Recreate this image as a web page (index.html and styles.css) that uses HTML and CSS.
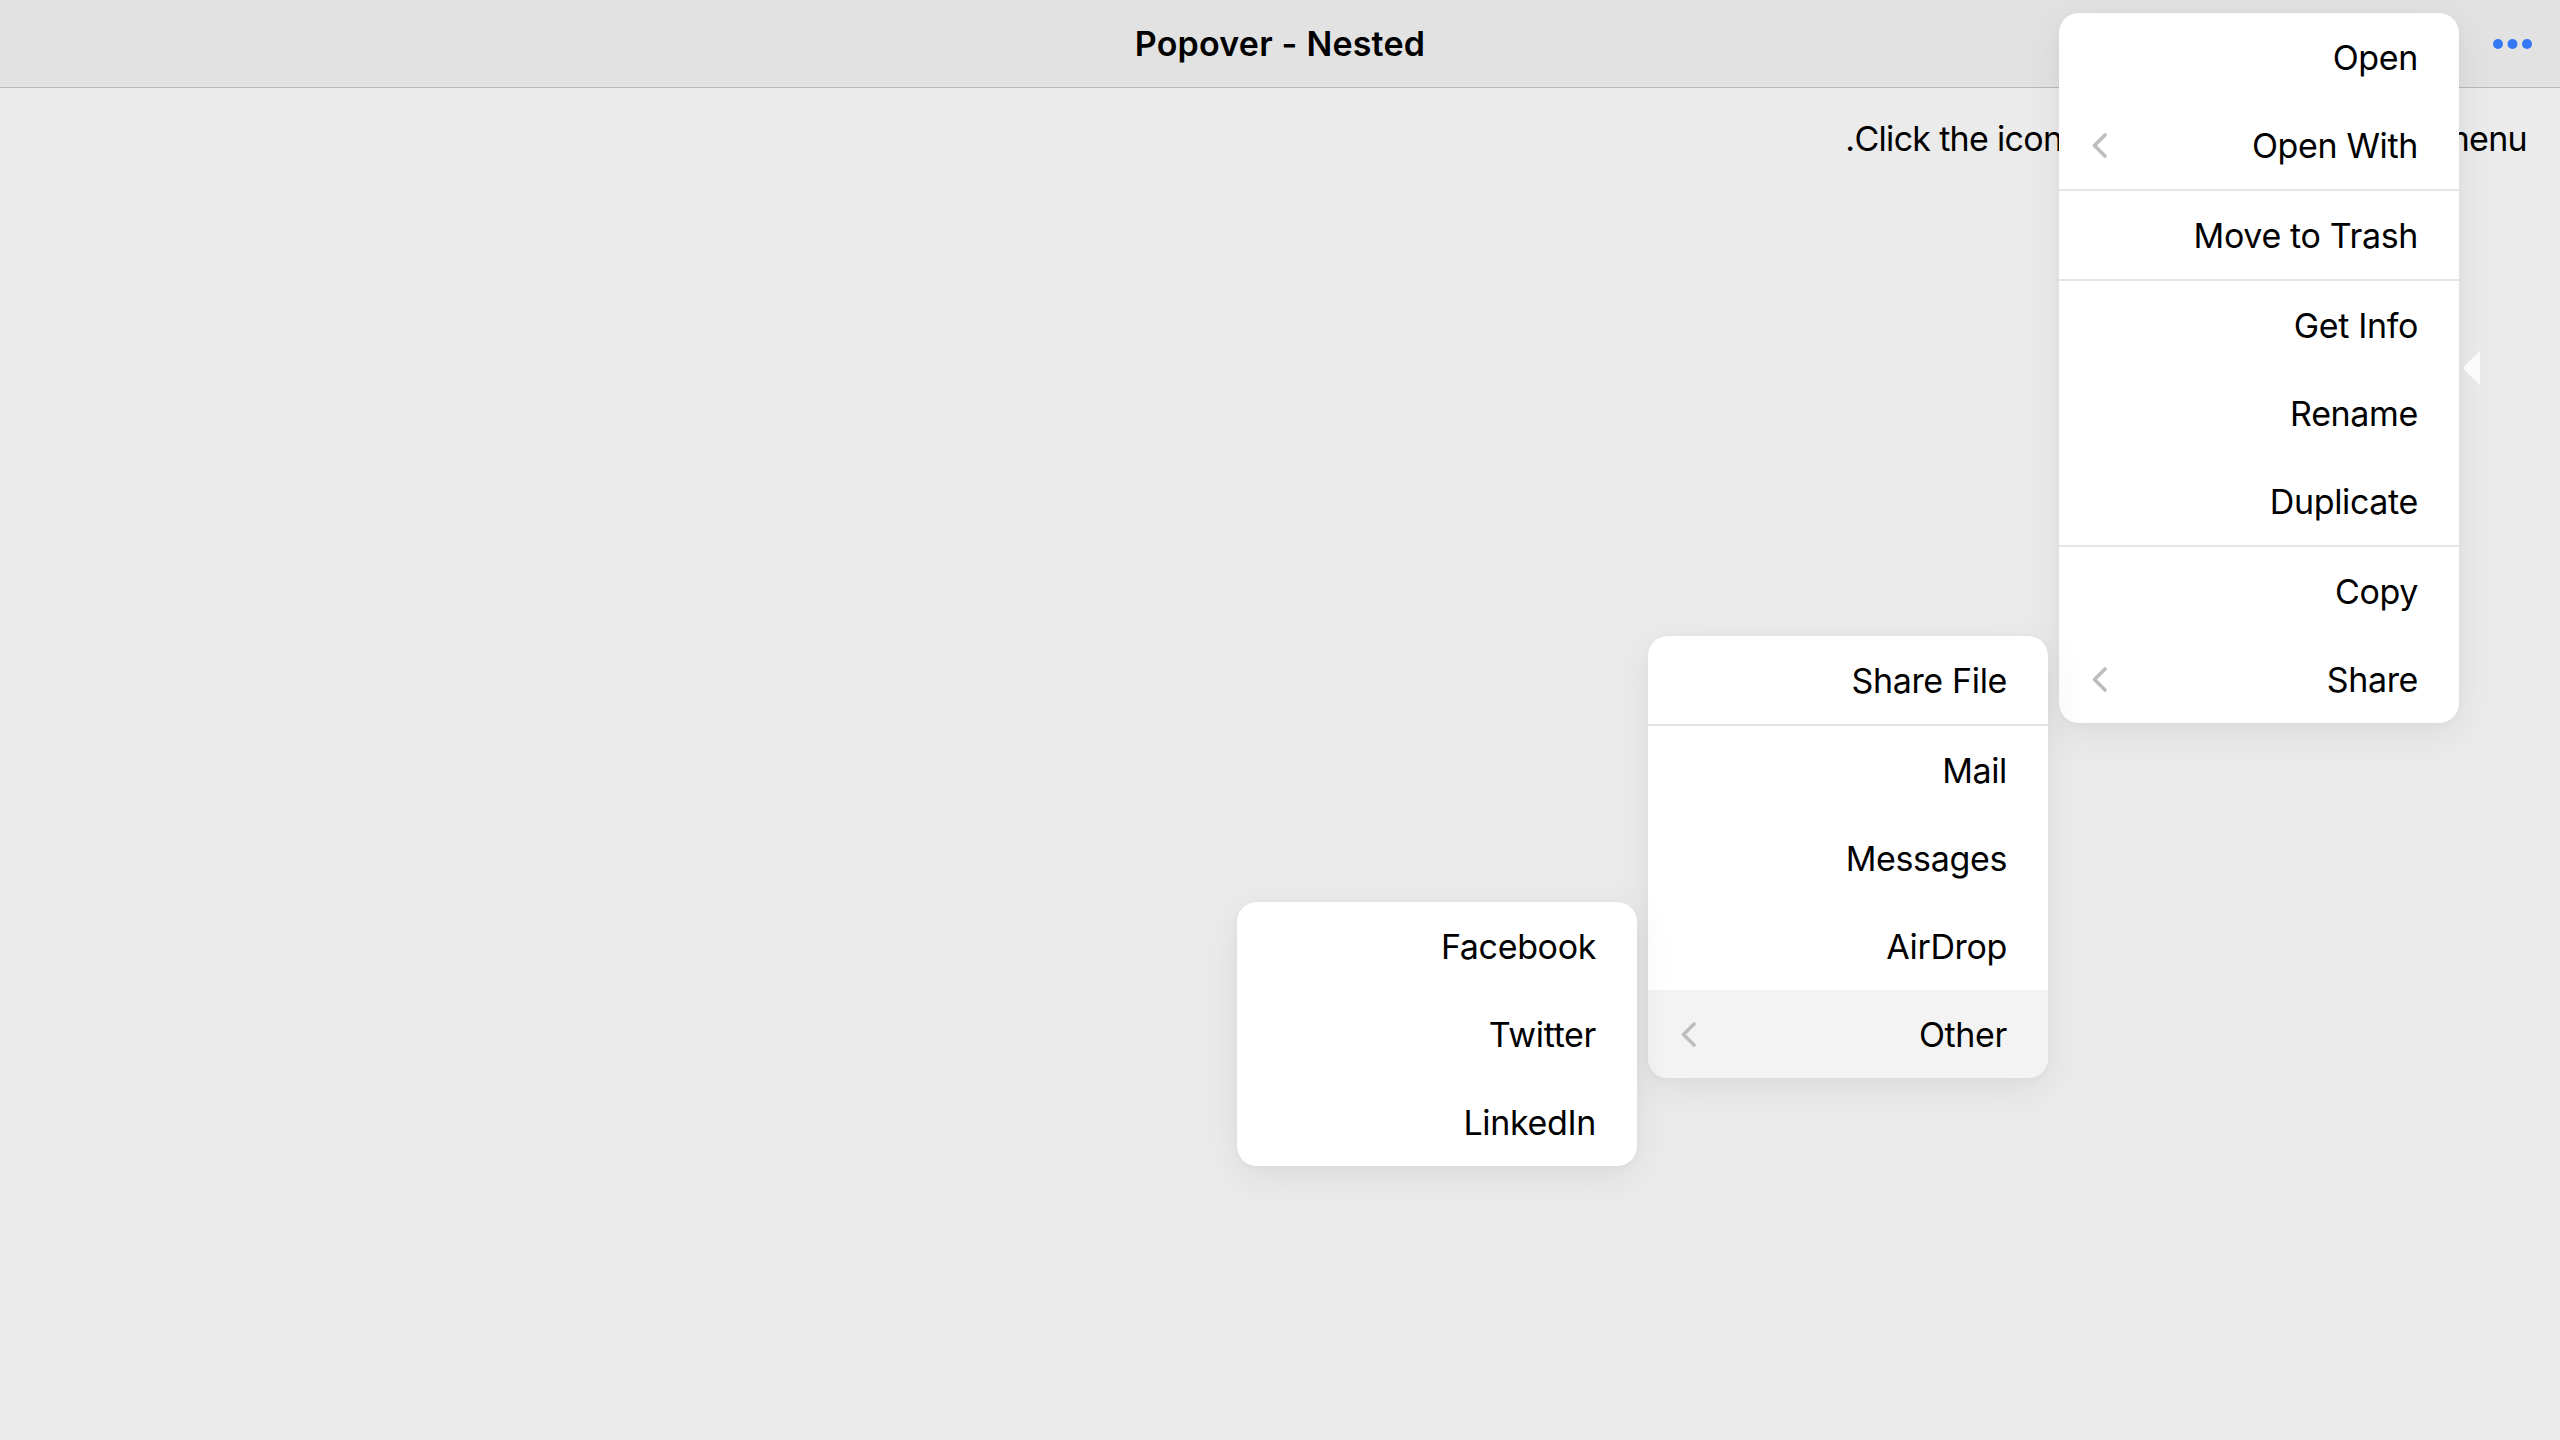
FILE: index.html
```html
<!DOCTYPE html>
<html lang="en">
<head>
<meta charset="utf-8">
<title>Popover - Nested</title>
<link rel="stylesheet" href="styles.css">
</head>
<body>
<header class="navbar">
  <div class="nav-side"></div>
  <h1 class="nav-title">Popover - Nested</h1>
  <div class="nav-side nav-right">
    <button class="more-btn" aria-label="More">
      <svg width="40" height="10" viewBox="0 0 40 10"><circle cx="5" cy="5" r="5"/><circle cx="19.5" cy="5" r="5"/><circle cx="34" cy="5" r="5"/></svg>
    </button>
  </div>
</header>
<main class="content">
  <p class="hint">Click the icon to open up the popover menu.</p>
</main>

<div class="menu menu-main">
  <div class="row"><span class="label">Open</span></div>
  <div class="row"><svg class="chev" width="15" height="25" viewBox="0 0 15 25"><polyline points="13,2 2.5,12.5 13,23"/></svg><span class="label">Open With</span></div>
  <div class="sep"></div>
  <div class="row"><span class="label">Move to Trash</span></div>
  <div class="sep"></div>
  <div class="row"><span class="label">Get Info</span></div>
  <div class="row"><span class="label">Rename</span></div>
  <div class="row"><span class="label">Duplicate</span></div>
  <div class="sep"></div>
  <div class="row"><span class="label">Copy</span></div>
  <div class="row"><svg class="chev" width="15" height="25" viewBox="0 0 15 25"><polyline points="13,2 2.5,12.5 13,23"/></svg><span class="label">Share</span></div>
</div>

<svg class="pop-arrow" width="17" height="34" viewBox="0 0 17 34"><path d="M17 0 L2 14.5 Q0 17 2 19.5 L17 34 Z"/></svg>

<div class="menu menu-share">
  <div class="row"><span class="label">Share File</span></div>
  <div class="sep"></div>
  <div class="row"><span class="label">Mail</span></div>
  <div class="row"><span class="label">Messages</span></div>
  <div class="row"><span class="label">AirDrop</span></div>
  <div class="row row-active"><svg class="chev" width="15" height="25" viewBox="0 0 15 25"><polyline points="13,2 2.5,12.5 13,23"/></svg><span class="label">Other</span></div>
</div>

<div class="menu menu-other">
  <div class="row"><span class="label">Facebook</span></div>
  <div class="row"><span class="label">Twitter</span></div>
  <div class="row"><span class="label">LinkedIn</span></div>
</div>
</body>
</html>
```
FILE: styles.css
```css
html, body {
  margin: 0;
  padding: 0;
}
body {
  background: #ebebeb;
  font-family: Inter, "Noto Sans", "Liberation Sans", sans-serif;
  color: #000;
  width: 2560px;
  height: 1440px;
  overflow: hidden;
  position: relative;
}
.navbar {
  height: 87px;
  background: #e2e2e2;
  border-bottom: 1px solid #b9b9b9;
  display: grid;
  grid-template-columns: 1fr auto 1fr;
  align-items: center;
}
.nav-title {
  margin: 0;
  font-size: 34px;
  font-weight: 600;
  letter-spacing: 0.2px;
}
.nav-right {
  display: flex;
  justify-content: flex-end;
  padding-right: 27px;
}
.more-btn {
  border: 0;
  background: none;
  padding: 0;
  display: flex;
  fill: #3478f6;
}
.content {
  padding: 30px 33px 0;
}
.hint {
  margin: 0;
  direction: rtl;
  font-size: 34px;
  line-height: 41px;
  letter-spacing: -0.7px;
}
.menu {
  position: absolute;
  width: 400px;
  background: #fff;
  border-radius: 20px;
  overflow: hidden;
  box-shadow: 0 10px 40px rgba(0, 0, 0, 0.07), 0 2px 8px rgba(0, 0, 0, 0.03);
}
.menu-main { left: 2059px; top: 13px; }
.menu-share { left: 1648px; top: 636px; }
.menu-other { left: 1237px; top: 902px; }
.row {
  height: 88px;
  display: flex;
  align-items: center;
  justify-content: flex-end;
  padding: 0 41px 0 33px;
  font-size: 34px;
  letter-spacing: -0.35px;
}
.row-active {
  background: #f3f3f3;
}
.chev {
  margin-right: auto;
  fill: none;
  stroke: #bdbdbd;
  stroke-width: 3.6;
  stroke-linecap: round;
  stroke-linejoin: round;
}
.sep {
  height: 2px;
  background: #e4e4e4;
}
.pop-arrow {
  position: absolute;
  left: 2463px;
  top: 351px;
  fill: #fbfbfb;
}
```
